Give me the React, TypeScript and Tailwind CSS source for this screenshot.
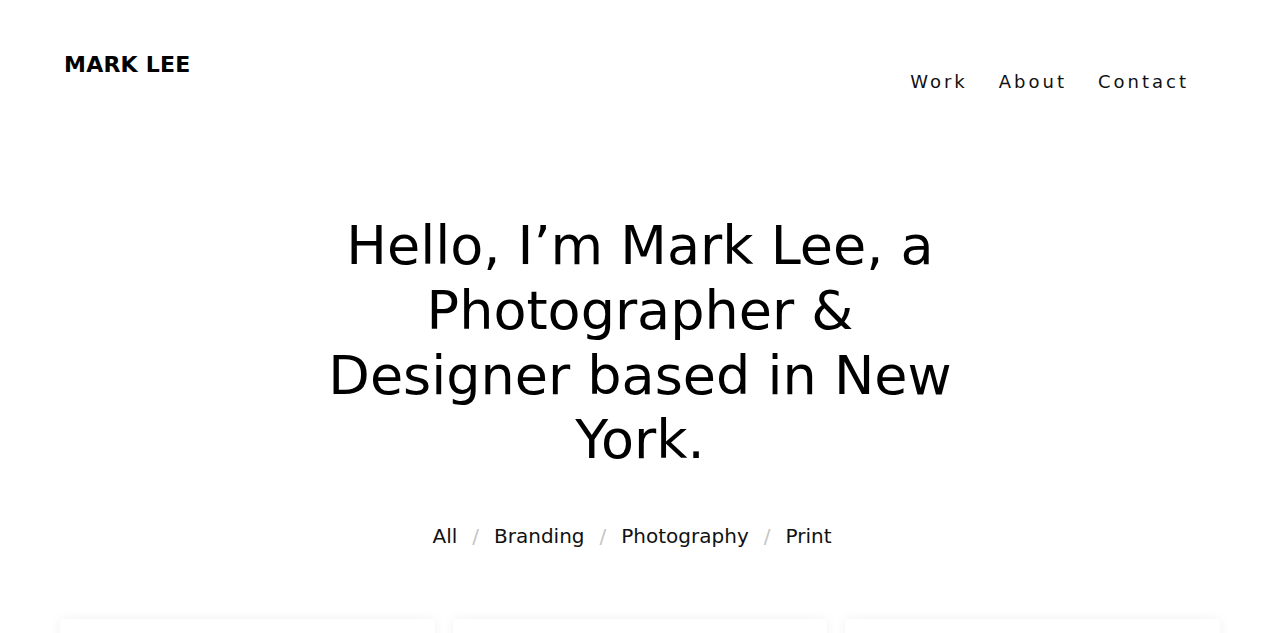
import React from "react";

const navLinks = ["Work", "About", "Contact"];
const filters = ["All", "Branding", "Photography", "Print"];

export default function App() {
  return (
    <div className="min-h-screen bg-white text-black font-['DejaVu_Sans',sans-serif]">
      {/* Header */}
      <header className="flex items-start justify-between pl-16 pr-[91px] pt-[54px]">
        <a href="#" className="text-[22px] leading-none font-bold tracking-[0.25px]">
          MARK LEE
        </a>
        <nav className="mt-[19px] flex gap-[31px]">
          {navLinks.map((link) => (
            <a
              key={link}
              href="#"
              className="text-[18px] leading-none tracking-[3px] text-[#111]"
            >
              {link}
            </a>
          ))}
        </nav>
      </header>

      {/* Hero */}
      <section className="mt-[123px] flex flex-col items-center">
        <h1 className="max-w-[640px] text-center text-[54px] leading-[64.8px] font-normal">
          Hello, I’m Mark Lee, a Photographer &amp; Designer based in New York.
        </h1>

        <ul className="mt-[48px] flex items-center pr-4 text-[20px] leading-[30px]">
          {filters.map((f, i) => (
            <li key={f} className="flex items-center">
              {i > 0 && <span className="mx-[15px] text-[#c4c4c4]">/</span>}
              <a href="#" className="text-[#111]">
                {f}
              </a>
            </li>
          ))}
        </ul>
      </section>

      {/* Portfolio grid */}
      <section className="mt-[68px] px-[60px] pb-16">
        <div className="grid grid-cols-3 gap-[18px]">
          {[0, 1, 2].map((n) => (
            <div
              key={n}
              className="h-[320px] rounded-sm bg-white shadow-[0_0_12px_rgba(0,0,0,0.06)]"
            />
          ))}
        </div>
      </section>
    </div>
  );
}
